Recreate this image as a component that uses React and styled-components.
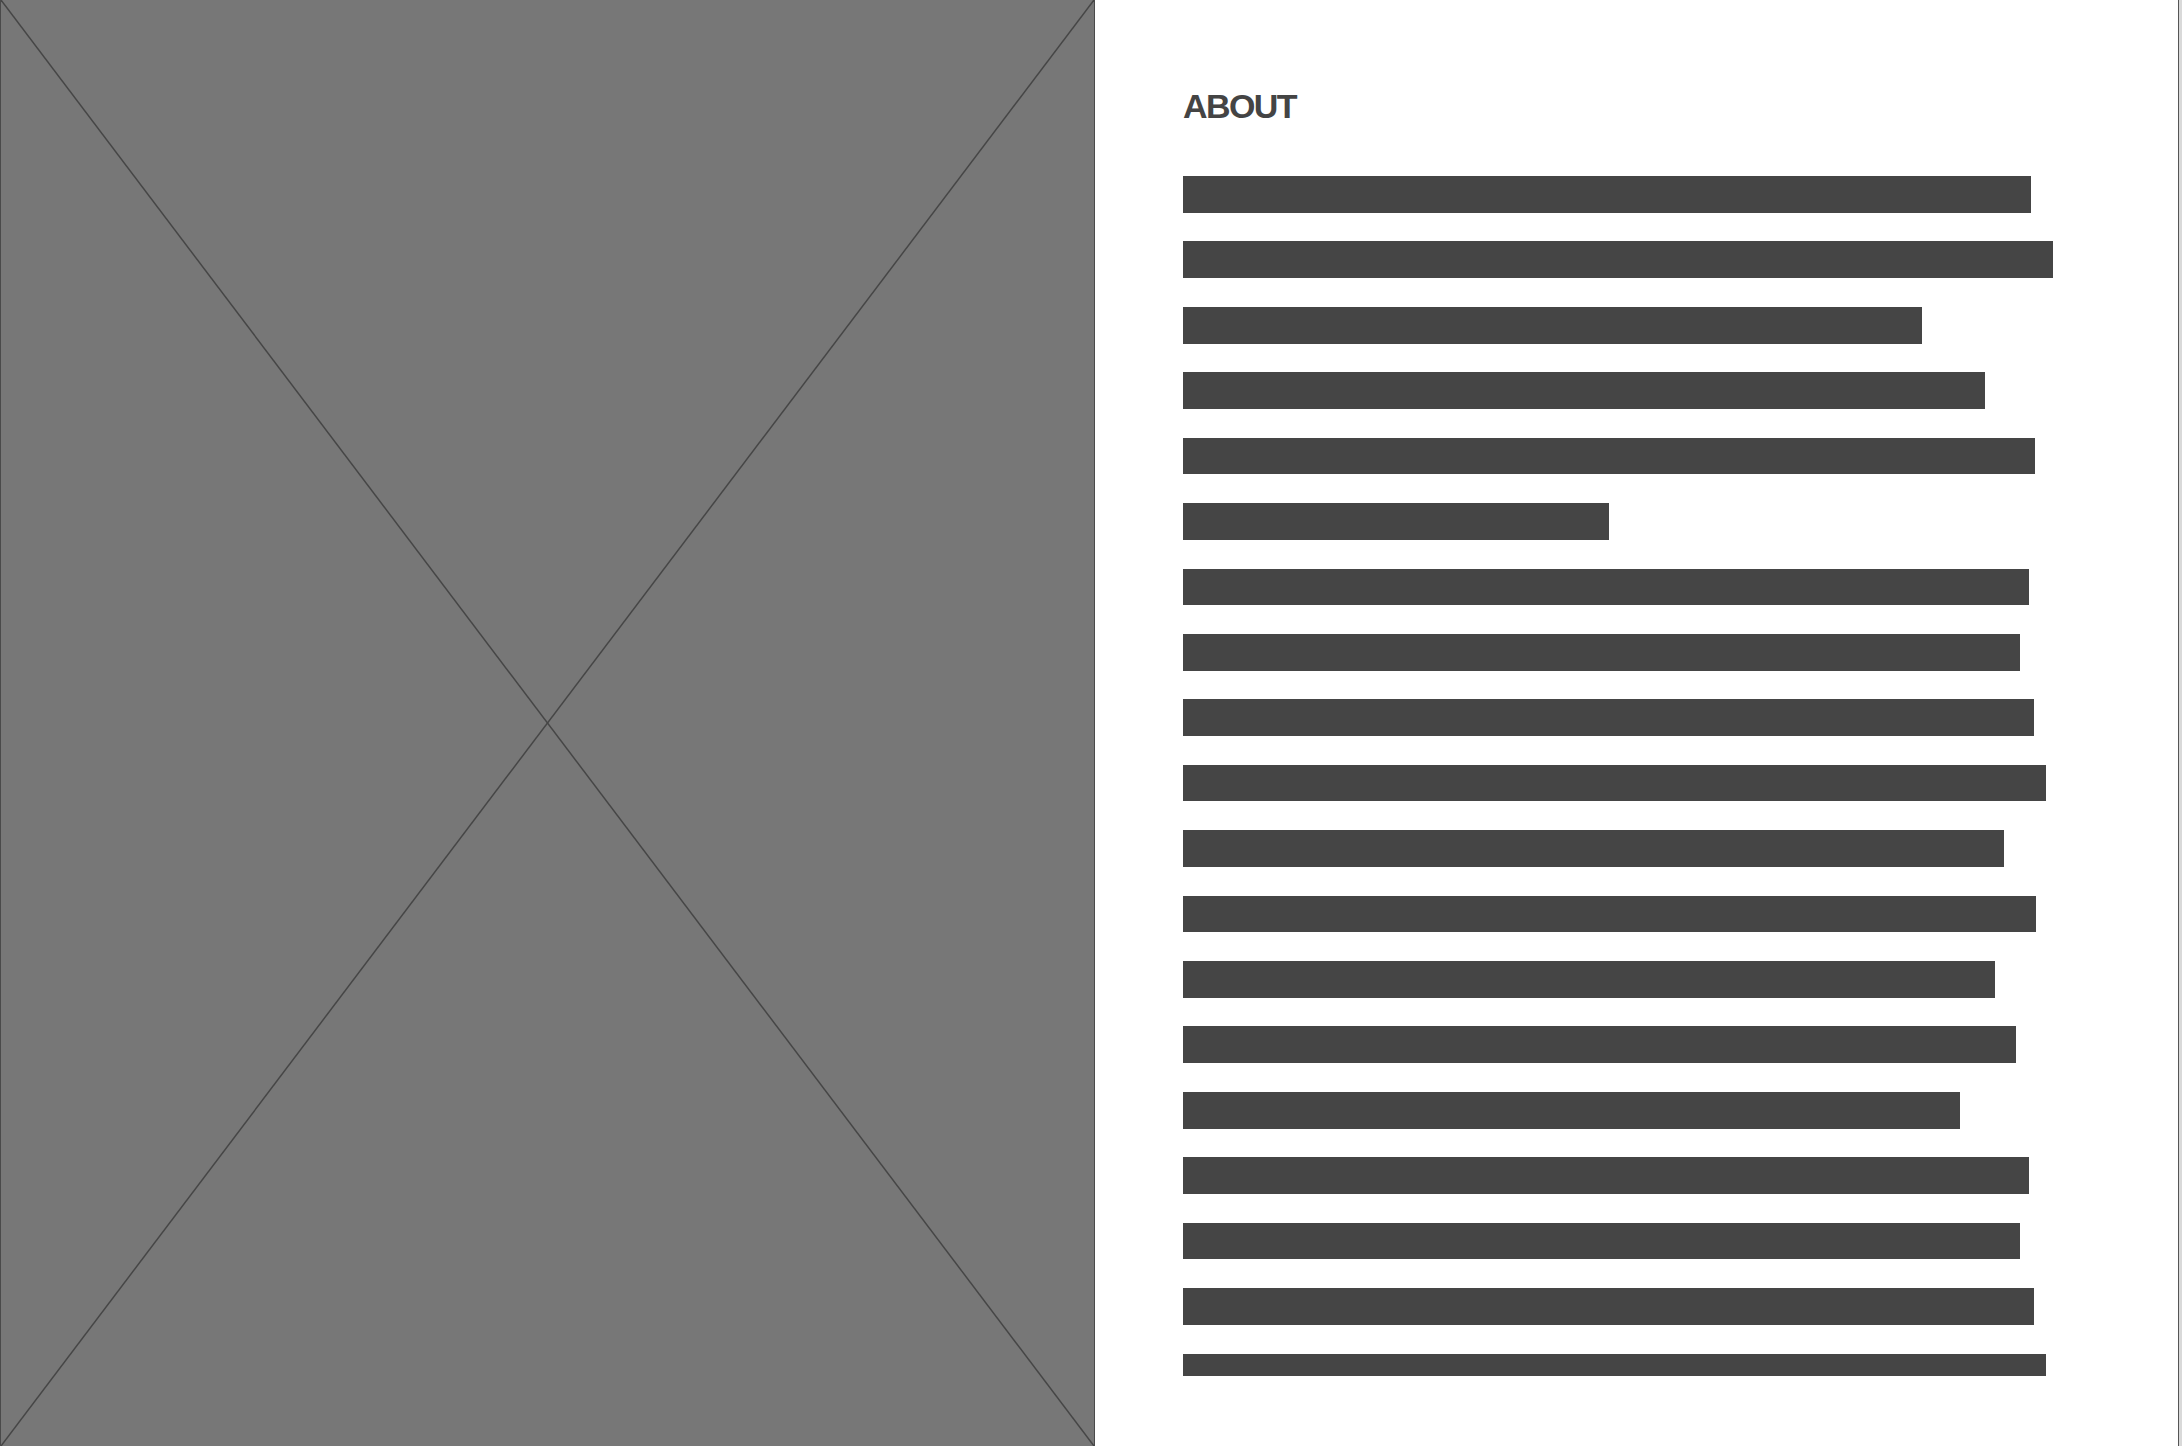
import React from "react";
import styled, { createGlobalStyle } from "styled-components";

const Global = createGlobalStyle`
  html, body {
    margin: 0;
    padding: 0;
    width: 2182px;
    height: 1446px;
    overflow: hidden;
    background: #ffffff;
  }
  * { box-sizing: border-box; }
`;

const Page = styled.div`
  display: flex;
  width: 2182px;
  height: 1446px;
  font-family: "Liberation Sans", Arial, sans-serif;
`;

const ImagePlaceholder = styled.div`
  position: relative;
  flex: 0 0 1095px;
  height: 1446px;
  background: #777777;
  border-left: 1px solid #4a4a4a;
  border-right: 1px solid #4a4a4a;
`;

const Cross = styled.svg`
  display: block;
  width: 100%;
  height: 100%;
`;

const Content = styled.section`
  flex: 1;
  height: 1446px;
  padding: 89px 0 0 88px;
  overflow: hidden;
`;

const Heading = styled.h2`
  margin: 0;
  font-size: 34px;
  line-height: 35px;
  font-weight: 700;
  letter-spacing: -1.6px;
  color: #444444;
`;

const Lines = styled.div`
  display: flex;
  flex-direction: column;
  align-items: flex-start;
  gap: 28.74px;
  margin-top: 52px;
`;

const Bar = styled.div`
  width: ${(p) => p.$w}px;
  height: ${(p) => p.$h || 36.7}px;
  background: #454545;
`;

const Edge = styled.div`
  flex: 0 0 4px;
  height: 1446px;
  border-left: 1.3px solid #555555;
  background: #d9d9d9;
`;

const widths = [848, 870, 739, 802, 852, 426, 846, 837, 851, 863, 821, 853, 812, 833, 777, 846, 837, 851, 863];

export default function App() {
  return (
    <>
      <Global />
      <Page>
        <ImagePlaceholder>
          <Cross viewBox="0 0 100 100" preserveAspectRatio="none">
            <line x1="0" y1="0" x2="100" y2="100" stroke="#464646" strokeWidth="1.5" vectorEffect="non-scaling-stroke" />
            <line x1="100" y1="0" x2="0" y2="100" stroke="#464646" strokeWidth="1.5" vectorEffect="non-scaling-stroke" />
          </Cross>
        </ImagePlaceholder>
        <Content>
          <Heading>ABOUT</Heading>
          <Lines>
            {widths.map((w, i) => (
              <Bar key={i} $w={w} $h={i === widths.length - 1 ? 22.7 : undefined} />
            ))}
          </Lines>
        </Content>
        <Edge />
      </Page>
    </>
  );
}
